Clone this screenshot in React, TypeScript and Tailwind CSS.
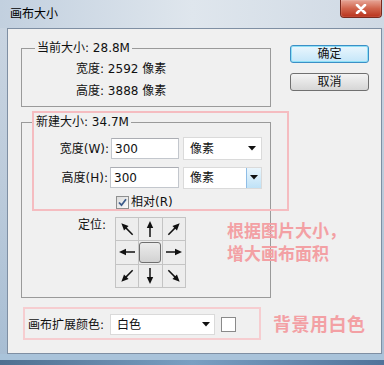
import React from "react";

const FONT = { fontFamily: '"DejaVu Sans", "Noto Sans CJK SC", sans-serif' };
const CJK = { fontFamily: '"Noto Sans CJK SC", "Noto Sans", sans-serif' };

function Arrow({ rot }: { rot: string }) {
  return (
    <svg width="14" height="18" viewBox="0 0 14 18" className={rot}>
      <line x1="7" y1="17" x2="7" y2="6" stroke="#111" strokeWidth="1.5" />
      <polygon points="7,1 3.8,8 10.2,8" fill="#111" />
    </svg>
  );
}

function Tri() {
  return (
    <svg width="8" height="5" viewBox="0 0 8 5">
      <polygon points="0,0 8,0 4,4.5" fill="#111" />
    </svg>
  );
}

function Cell({ children }: { children?: React.ReactNode }) {
  return (
    <div className="flex items-center justify-center border-r border-b border-[#c4c4c4] bg-[#ededed]">
      {children}
    </div>
  );
}

export default function App() {
  return (
    <div
      className="relative w-[384px] h-[365px] overflow-hidden bg-gradient-to-b from-[#cbd6e2] via-[#bccbdb] to-[#a7bdd3] text-[12px] text-[#111]"
      style={FONT}
    >
      {/* title bar */}
      <div className="flex h-[28px] items-start bg-gradient-to-r from-[#c2d0df] via-[#dfe6ed] to-[#cfd9e4]">
        <div className="pl-[10px] pt-[5px] text-[12px] leading-[16px] text-black" style={CJK}>画布大小</div>
        <div className="flex-1" />
        <div className="mr-[2px] flex h-[18px] w-[42px] items-center justify-center rounded-b-[4px] border border-t-0 border-[#7a2a1e] bg-gradient-to-b from-[#e6a597] via-[#d0644c] to-[#b8301a] shadow-[inset_0_0_1px_#fff]">
          <svg width="12" height="10" viewBox="0 0 12 10">
            <path d="M2 1 L10 9 M10 1 L2 9" stroke="#fff" strokeWidth="2.6" strokeLinecap="round" />
          </svg>
        </div>
      </div>

      {/* client area */}
      <div className="relative ml-[7px] mr-[2px] h-[326px] border border-[#7f8fa3] bg-[#f0f0f0]">
        <div className="flex pl-[13px]">
          {/* left column */}
          <div className="flex w-[250px] flex-col pt-[11px]">
            <fieldset className="border border-[#9a9a9a] px-0 pb-[4px]">
              <legend className="ml-[13px] px-[2px] leading-[16px]">当前大小: 28.8M</legend>
              <div className="pl-[54px] pt-[2px]">
                <div className="leading-[22px]">宽度: 2592 像素</div>
                <div className="leading-[22px]">高度: 3888 像素</div>
              </div>
            </fieldset>

            <fieldset className="mt-[7px] border border-[#9a9a9a] px-0 pb-[9px]">
              <legend className="ml-[12px] px-[2px] leading-[16px]">新建大小: 34.7M</legend>
              <div className="mt-[7px] flex h-[23px] items-center">
                <span className="w-[87px] text-right">宽度(W):</span>
                <div className="ml-[2px] flex h-[21px] w-[68px] items-center border border-[#c3c7cd] border-t-[#abadb3] bg-white pl-[3px]">300</div>
                <div className="ml-[4px] flex h-[23px] w-[79px] items-center justify-between border border-[#dadada] bg-white pl-[6px] pr-[5px]">
                  <span>像素</span>
                  <Tri />
                </div>
              </div>
              <div className="mt-[6px] flex h-[23px] items-center">
                <span className="w-[86px] text-right">高度(H):</span>
                <div className="ml-[2px] flex h-[21px] w-[69px] items-center border border-[#c3c7cd] border-t-[#abadb3] bg-white pl-[3px]">300</div>
                <div className="ml-[4px] flex h-[22px] w-[79px] items-stretch border border-[#dadada] bg-white">
                  <span className="flex flex-1 items-center pl-[6px]">像素</span>
                  <div className="flex w-[15px] items-center justify-center border-l border-[#8fbde6] bg-gradient-to-b from-[#eaf6fd] to-[#bfe2f7]">
                    <Tri />
                  </div>
                </div>
              </div>
              <div className="mt-[5px] flex h-[16px] items-center pl-[94px]">
                <div className="flex h-[13px] w-[13px] items-center justify-center border border-[#8e8f8f] bg-gradient-to-br from-[#dcdcdc] to-[#fafafa]">
                  <svg width="9" height="9" viewBox="0 0 9 9">
                    <path d="M1 4.5 L3.5 7.2 L8 1.2" fill="none" stroke="#3b5a8a" strokeWidth="1.8" />
                  </svg>
                </div>
                <span className="ml-[2px] leading-[16px]">相对(R)</span>
              </div>
              <div className="mt-[7px] flex items-start">
                <span className="w-[93px] pr-[9px] text-right leading-[16px]">定位:</span>
                <div className="grid h-[71px] w-[71px] grid-cols-3 grid-rows-3 border-l border-t border-[#c4c4c4]">
                  <Cell><Arrow rot="-rotate-45" /></Cell>
                  <Cell><Arrow rot="" /></Cell>
                  <Cell><Arrow rot="rotate-45" /></Cell>
                  <Cell><Arrow rot="-rotate-90" /></Cell>
                  <Cell>
                    <div className="h-[21px] w-[22px] rounded-[3px] border border-[#6f6f6f] bg-gradient-to-b from-[#ececec] to-[#d2d2d2]" />
                  </Cell>
                  <Cell><Arrow rot="rotate-90" /></Cell>
                  <Cell><Arrow rot="-rotate-135" /></Cell>
                  <Cell><Arrow rot="rotate-180" /></Cell>
                  <Cell><Arrow rot="rotate-135" /></Cell>
                </div>
              </div>
            </fieldset>

            <div className="ml-[7px] mt-[16px] flex h-[21px] items-center">
              <span className="w-[82px]">画布扩展颜色:</span>
              <div className="flex h-[21px] w-[105px] items-center justify-between border border-[#dadada] bg-white pl-[6px] pr-[4px]">
                <span>白色</span>
                <Tri />
              </div>
              <div className="ml-[6px] h-[15px] w-[15px] border border-[#8a8a8a] bg-white" />
            </div>
          </div>

          {/* right column */}
          <div className="ml-[19px] flex flex-col gap-[10px] pt-[16px]">
            <div className="flex h-[18px] w-[79px] items-center justify-center rounded-[3px] border border-[#3c8fc6] bg-gradient-to-b from-[#eaf6fd] to-[#c4e6f9] shadow-[inset_0_0_0_1px_#8fe0f6]">
              确定
            </div>
            <div className="flex h-[18px] w-[79px] items-center justify-center rounded-[3px] border border-[#707070] bg-gradient-to-b from-[#f4f4f4] to-[#d6d6d6]">
              取消
            </div>
          </div>
        </div>

        {/* pink annotation overlays */}
        <div className="pointer-events-none absolute left-[24px] top-[82px] h-[100px] w-[257px] border-2 border-[#f5bcc0]" />
        <div className="pointer-events-none absolute left-[15px] top-[278px] h-[33px] w-[238px] border-2 border-[#f6cdd0]" />
        <div className="pointer-events-none absolute left-[219px] top-[189px] text-[17px] font-bold leading-[23px] text-[#f3a0a4]" style={CJK}>
          <div>根据图片大小，</div>
          <div>增大画布面积</div>
        </div>
        <div className="pointer-events-none absolute left-[265px] top-[282px] text-[18px] font-bold leading-[24px] tracking-[0.5px] text-[#f3a0a4]" style={CJK}>
          背景用白色
        </div>
      </div>

      {/* bottom frame */}
      <div className="h-[6px] bg-[#a9c3da]" />
      <div className="h-[5px] bg-gradient-to-r from-[#4f6f90] via-[#7a9fc2] to-[#51739a]" />
    </div>
  );
}
